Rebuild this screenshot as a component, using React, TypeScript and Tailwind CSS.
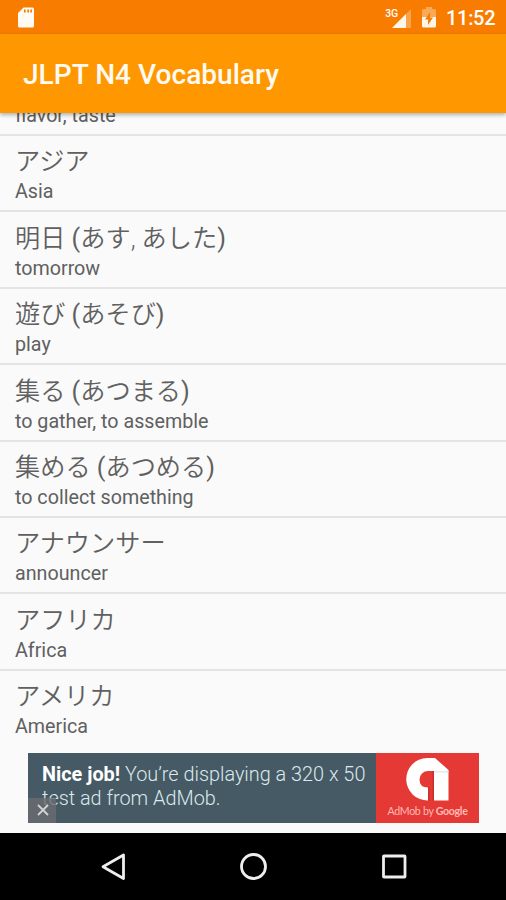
const words = [
  { term: 'アジア', reading: '', meaning: 'Asia' },
  { term: '明日', reading: 'あす, あした', meaning: 'tomorrow' },
  { term: '遊び', reading: 'あそび', meaning: 'play' },
  { term: '集る', reading: 'あつまる', meaning: 'to gather, to assemble' },
  { term: '集める', reading: 'あつめる', meaning: 'to collect something' },
  { term: 'アナウンサー', reading: '', meaning: 'announcer' },
  { term: 'アフリカ', reading: '', meaning: 'Africa' },
  { term: 'アメリカ', reading: '', meaning: 'America' },
];

function StatusBar() {
  return (
    <div className="flex h-[34px] shrink-0 items-center bg-[#f77c00] pl-[17px] pr-[10px] text-white">
      <svg width="18" height="22" viewBox="0 0 18 22" className="mt-px">
        <path
          fillRule="evenodd"
          fill="#fffaf2"
          d="M6.500 .5h9q1.500 0 1.500 1.500v17q0 1.500-1.500 1.500h-13q-1.500 0-1.500-1.500V6zM7 2.500v3h1.700v-3zM10.300 2.500v3h1.700v-3zM13.300 2.500v3h1.700v-3z"
        />
      </svg>
      <div className="ml-auto flex h-full items-center">
        <svg width="28" height="24" viewBox="0 0 28 24" className="mt-px overflow-visible">
          <path d="M25 3v19H6z" fill="#fff" fillOpacity=".3" />
          <path d="M20 8v14H6z" fill="#fff6ea" />
          <text x="-.8" y="10.500" fontSize="11.500" fontWeight="500" fill="#fff" fontFamily="Roboto, sans-serif" textLength="13" lengthAdjust="spacingAndGlyphs">
            3G
          </text>
        </svg>
        <svg width="14" height="21" viewBox="0 0 14 21" className="ml-2 mt-px">
          <path d="M4 0h6v2h2.500q1.500 0 1.500 1.500V10H0V3.500Q0 2 1.500 2H4z" fill="#fff" fillOpacity=".35" />
          <path d="M0 10h14v9q0 1.500-1.500 1.500h-11Q0 20.500 0 19z" fill="#fff6ea" />
          <path d="M8 5v5.500h3L6 18v-5.500H3z" fill="#f77c00" />
        </svg>
        <span className="ml-[10px] mt-[2px] w-[50px] text-[20px] font-medium leading-6 tracking-[-0.3px]">11:52</span>
      </div>
    </div>
  );
}

function AdBanner() {
  return (
    <div className="relative ml-[28px] flex h-[70px] w-[451px] shrink-0 bg-[#455a64]">
      <p className="w-[348px] whitespace-nowrap pl-[14px] pt-[10px] text-[19.85px] font-light leading-[23.5px] text-[#dce8ed]">
        <b className="font-bold text-white">Nice job!</b> You’re displaying a 320 x 50
        <br />
        test ad from AdMob.
      </p>
      <div className="flex flex-1 flex-col items-center bg-[#e53935]">
        <svg width="43" height="43" viewBox="0 0 43 43" className="mt-[5px]">
          <path d="M21 0h8l13.500 12v30.500H28V13h-6a8.500 8.500 0 0 0-8.500 8.500q0 8 8.500 8v13A21 21 0 0 1 21 0z" fill="#fff" />
          <path d="M28 13h14.500v1.500H28z" fill="#e8e8e8" />
          <path d="M22 29.500h1.500v13H22zM26.500 13H28v29.500h-1.500z" fill="#c92f2c" />
        </svg>
        <span className="mt-[3px] whitespace-nowrap font-['Lato',sans-serif] text-[10.6px] leading-[14px] tracking-[-0.3px] text-[#ffb9b5]">
          AdMob by <span className="font-bold">Google</span>
        </span>
      </div>
      <div className="absolute bottom-0 left-0 flex h-[25px] w-[28px] items-center justify-center bg-[#696b6f]/80">
        <svg width="12" height="12" viewBox="0 0 12 12" className="-mt-[2px] ml-[2px]">
          <path d="M1 1l10 10M11 1L1 11" stroke="#d3d3d3" strokeWidth="1.800" />
        </svg>
      </div>
    </div>
  );
}

function NavBar() {
  return (
    <div className="flex h-[67px] shrink-0 items-center justify-between bg-black pl-[98px] pr-[98px]">
      <svg width="28" height="30" viewBox="0 0 28 30" fill="none" stroke="#eee" strokeWidth="2.800">
        <path d="M25.500 3v23.500L5 14.700z" strokeLinejoin="round" />
      </svg>
      <svg width="28" height="28" viewBox="0 0 28 28" fill="none" stroke="#eee" strokeWidth="2.800">
        <circle cx="14.500" cy="13.500" r="12" />
      </svg>
      <svg width="28" height="28" viewBox="0 0 28 28" fill="none" stroke="#eee" strokeWidth="2.800">
        <rect x="3.500" y="3" width="21.500" height="21" rx=".5" />
      </svg>
    </div>
  );
}

export default function App() {
  return (
    <div className="flex h-[900px] w-[506px] flex-col overflow-hidden bg-[#fafafa] font-[Roboto,'Noto_Sans_CJK_JP',sans-serif]">
      <StatusBar />
      <header className="z-10 flex h-[79px] shrink-0 items-center bg-[#ff9800] pl-[23px] shadow-[0_2px_4px_rgba(0,0,0,0.3)]">
        <h1 className="pt-[3px] text-[28.1px] font-medium leading-8 text-[#fffaf2]">JLPT N4 Vocabulary</h1>
      </header>
      <main lang="ja" className="flex h-[640px] shrink-0 flex-col overflow-hidden text-[#606060]">
        <div className="flex h-[23px] shrink-0 items-end border-b-2 border-[#e4e4e4] pl-[15px]">
          <span className="mb-[6px] text-[19.7px] leading-6">flavor, taste</span>
        </div>
        {words.map((word) => (
          <div
            key={word.term}
            className="h-[76.4px] shrink-0 border-b-2 border-[#e4e4e4] pl-[15px] pt-[10.4px] last:border-transparent"
          >
            <div className="whitespace-nowrap text-[25.2px] font-[350] leading-[32px]">
              {word.term}
              {word.reading && (
                <>
                  <span className="font-normal"> (</span>
                  {word.reading}
                  <span className="font-normal">)</span>
                </>
              )}
            </div>
            <div className="mt-[2px] whitespace-nowrap text-[19.7px] leading-6">{word.meaning}</div>
          </div>
        ))}
      </main>
      <AdBanner />
      <div className="h-[10px] shrink-0" />
      <NavBar />
    </div>
  );
}
